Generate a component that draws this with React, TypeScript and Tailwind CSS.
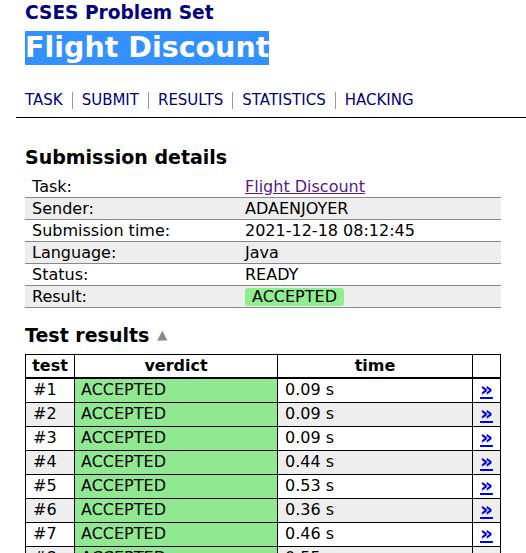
import React from 'react';

const details: [string, React.ReactNode][] = [
  ['Task:', <a href="#" className="text-[#551a8b] underline">Flight Discount</a>],
  ['Sender:', 'ADAENJOYER'],
  ['Submission time:', '2021-12-18 08:12:45'],
  ['Language:', 'Java'],
  ['Status:', 'READY'],
  ['Result:', <span className="inline-block rounded-[3px] bg-[#90ee90] px-[7px] leading-[18px]">ACCEPTED</span>],
];

const times = ['0.09', '0.09', '0.09', '0.44', '0.53', '0.36', '0.46', '0.55', '0.41'];

export default function App() {
  return (
    <div className="min-h-screen bg-white text-black" style={{ fontFamily: '"DejaVu Sans", Verdana, sans-serif' }}>
      <div className="pl-[16px]">
        <div className="pl-[9px] pt-[1px]">
          <div className="text-[18.6px] font-bold leading-[24px] text-[#000080]">CSES Problem Set</div>
          <div className="mt-[6px] h-[34px]">
            <span className="inline-block bg-[#3390ff] text-[28.5px] font-bold leading-[34px] text-white">Flight Discount</span>
          </div>
          <nav className="mt-[26px] flex items-center text-[15px] leading-[19px] text-[#000080]">
            {['TASK', 'SUBMIT', 'RESULTS', 'STATISTICS', 'HACKING'].map((t, i) => (
              <React.Fragment key={t}>
                {i > 0 && <span className="mx-[9px] h-[17px] w-px bg-[#999]" />}
                <a href="#">{t}</a>
              </React.Fragment>
            ))}
          </nav>
        </div>
        <div className="mt-[7px] h-px bg-black" />
      </div>

      <div className="px-[25px] pt-[27px]">
        <h2 className="text-[19px] font-bold leading-[24px]">Submission details</h2>
        <table className="mt-[7px] w-[476px] border-collapse text-[16px] leading-[21px]">
          <tbody>
            {details.map(([k, v], i) => (
              <tr key={k} className={`${i > 0 ? 'border-t border-[#888]' : ''} ${i % 2 === 1 ? 'bg-[#eee]' : ''} ${i === details.length - 1 ? 'border-b border-[#888]' : ''}`}>
                <td className="w-[220px] pl-[7px]">{k}</td>
                <td>{v}</td>
              </tr>
            ))}
          </tbody>
        </table>

        <h2 className="mt-[15px] flex items-center text-[19px] font-bold leading-[24px]">
          Test results
          <span className="ml-[8px] text-[13px] text-[#888]">▲</span>
        </h2>
        <table className="mt-[7px] w-[476px] border-collapse border border-black text-[16px] leading-[22px]">
          <thead>
            <tr className="border-b-2 border-black">
              <th className="w-[49px] border border-black">test</th>
              <th className="w-[203px] border border-black">verdict</th>
              <th className="w-[195px] border border-black">time</th>
              <th className="border border-black"></th>
            </tr>
          </thead>
          <tbody>
            {times.map((t, i) => (
              <tr key={i} className={`h-[24px] ${i % 2 === 1 ? 'bg-[#eee]' : ''}`}>
                <td className="border border-black pl-[7px]">#{i + 1}</td>
                <td className="border border-black bg-[#90e890] pl-[6px]">ACCEPTED</td>
                <td className="border border-black pl-[7px]">{t} s</td>
                <td className="border border-black p-0 text-center leading-[20px]">
                  <a href="#" className="text-[20px] font-bold leading-[20px] text-[#0000ee] underline">»</a>
                </td>
              </tr>
            ))}
          </tbody>
        </table>
      </div>
    </div>
  );
}
